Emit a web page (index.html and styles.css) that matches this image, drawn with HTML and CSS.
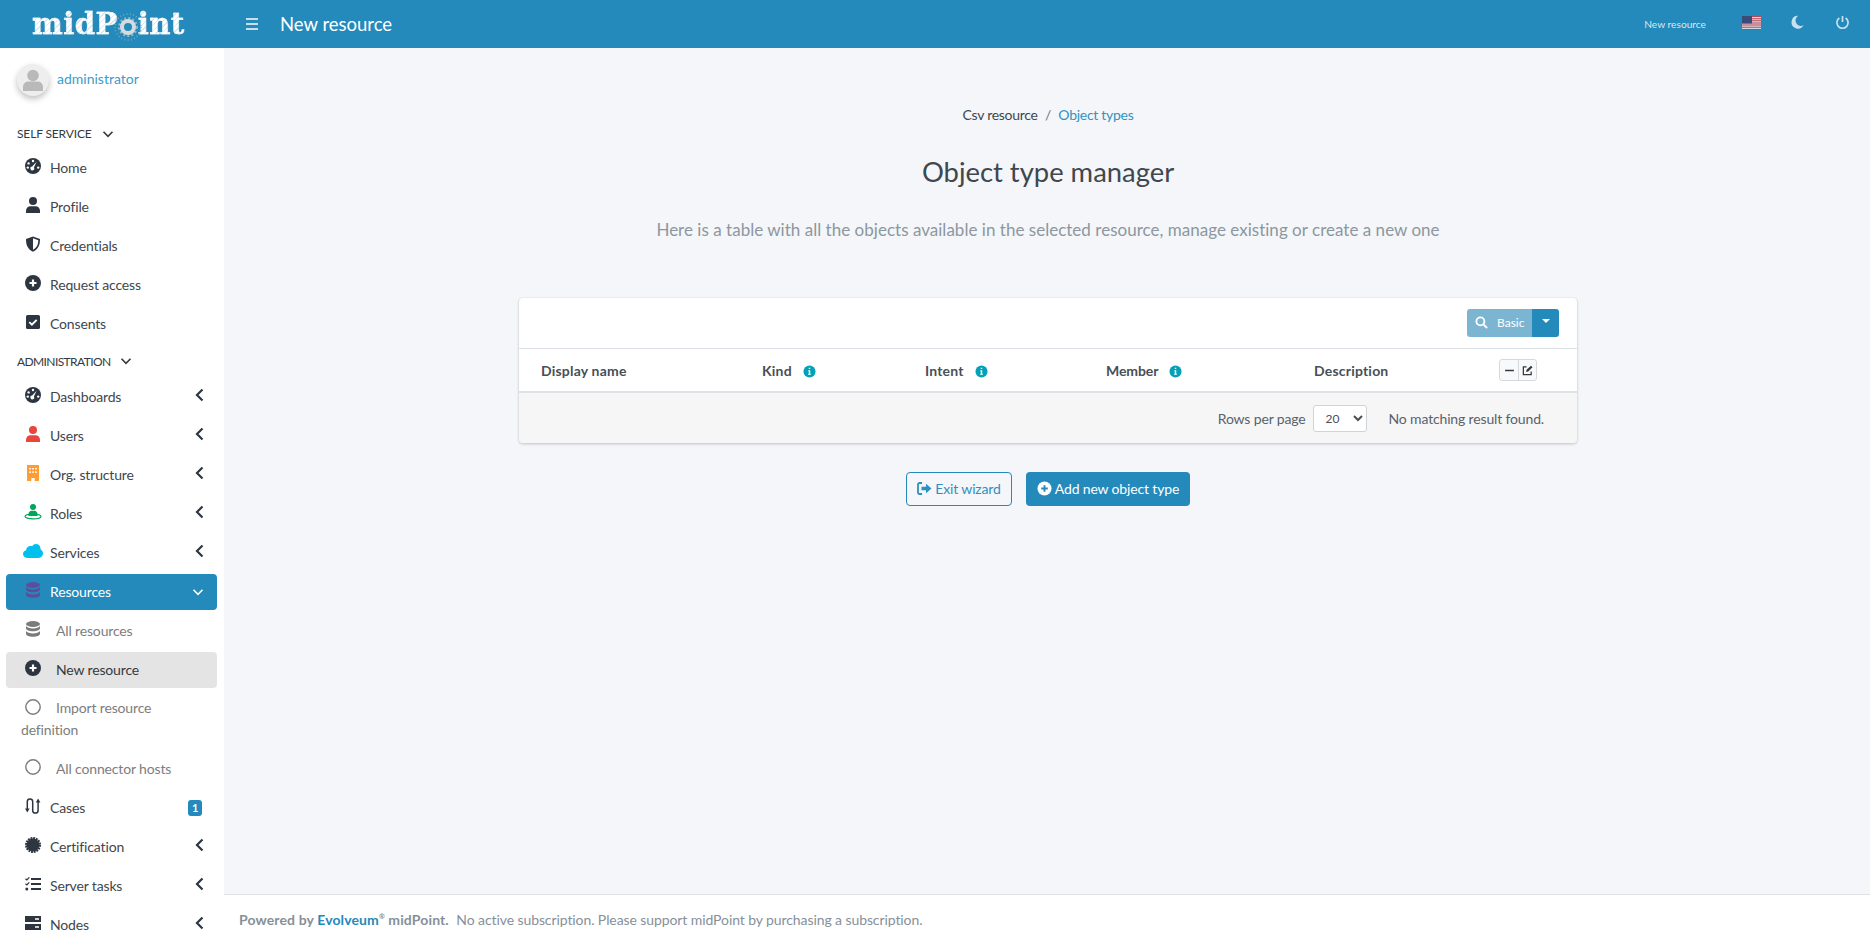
FILE: index.html
```html
<!DOCTYPE html>
<html lang="en">
<head>
  <meta charset="UTF-8" />
  <title>New resource</title>
  <link rel="stylesheet" href="styles.css">
</head>
<body>

  <svg class="sprite" xmlns="http://www.w3.org/2000/svg">
    <symbol id="i-gauge" viewBox="0 0 16 16">
      <circle cx="8" cy="8" r="8" fill="currentColor"/>
      <circle cx="8" cy="3" r="1.2" fill="#fff"/>
      <circle cx="3.6" cy="5.4" r="1.2" fill="#fff"/>
      <circle cx="2.8" cy="9.6" r="1.2" fill="#fff"/>
      <circle cx="13.2" cy="9.6" r="1.2" fill="#fff"/>
      <path d="M11.6 3.8 8.9 9.4a1.9 1.9 0 1 1-1.7-.9z" fill="#fff"/>
    </symbol>
    <symbol id="i-user" viewBox="0 0 16 16">
      <circle cx="8" cy="4" r="4" fill="currentColor"/>
      <path d="M1 16v-2.200C1 11 3 9.200 5.500 9.200h5C13 9.200 15 11 15 13.800V16z" fill="currentColor"/>
    </symbol>
    <symbol id="i-shield" viewBox="0 0 16 16">
      <path d="M8 .5 1 3c0 6 1.500 10 7 12.800C13.500 13 15 9 15 3zM8 13.800V2.300l5.300 1.900C13.100 8.800 11.800 11.700 8 13.800z" fill="currentColor" fill-rule="evenodd"/>
    </symbol>
    <symbol id="i-plus" viewBox="0 0 16 16">
      <circle cx="8" cy="8" r="8" fill="currentColor"/>
      <path d="M8 4.500v7M4.500 8h7" stroke="#fff" stroke-width="2.200"/>
    </symbol>
    <symbol id="i-check" viewBox="0 0 16 16">
      <rect x="1" y="1" width="14" height="14" rx="1.600" fill="currentColor"/>
      <path d="M4.300 8.100 6.900 10.600 11.700 5.800" fill="none" stroke="#fff" stroke-width="1.900"/>
    </symbol>
    <symbol id="i-building" viewBox="0 0 16 16">
      <path d="M2 0h12v16H9.700v-3H6.300v3H2z" fill="currentColor"/>
      <path d="M4.300 3h1.600v1.600H4.300zM7.200 3h1.600v1.600H7.200zM10.100 3h1.600v1.600h-1.600zM4.300 6.300h1.600v1.600H4.300zM7.200 6.300h1.600v1.600H7.200zM10.100 6.300h1.600v1.600h-1.600z" fill="#fff"/>
    </symbol>
    <symbol id="i-role" viewBox="0 0 18 16">
      <circle cx="9" cy="3" r="3" fill="currentColor"/>
      <path d="M4.500 12V10c0-2 1.500-3.300 3-3.300h3c1.500 0 3 1.300 3 3.300v2z" fill="currentColor"/>
      <ellipse cx="9" cy="12.500" rx="8" ry="2.400" fill="none" stroke="currentColor" stroke-width="1.200"/>
    </symbol>
    <symbol id="i-cloud" viewBox="0 0 20 16">
      <path d="M4.500 15C2 15 0 13.200 0 11c0-1.900 1.300-3.400 3.100-3.800C3.300 4.800 5 3 7.500 3c.6-.1 1.200 0 1.700.3C10 1.900 11.500 1 13 1c2.600 0 4.500 2 4.500 4.500v.7c1.500.8 2.500 2.300 2.500 4.100 0 2.600-2 4.700-4.600 4.700z" fill="currentColor"/>
    </symbol>
    <symbol id="i-db" viewBox="0 0 16 16">
      <ellipse cx="8" cy="3" rx="7" ry="3" fill="currentColor"/>
      <path d="M1 5v2.300c0 1.700 3.100 3 7 3s7-1.300 7-3V5c-1 1.600-3.800 2.500-7 2.500S2 6.600 1 5z" fill="currentColor"/>
      <path d="M1 10v2.700c0 1.700 3.100 3 7 3s7-1.300 7-3V10c-1 1.600-3.800 2.500-7 2.500S2 11.600 1 10z" fill="currentColor"/>
    </symbol>
    <symbol id="i-ring" viewBox="0 0 16 16">
      <circle cx="8" cy="8" r="7.200" fill="none" stroke="currentColor" stroke-width="1.400"/>
    </symbol>
    <symbol id="i-cases" viewBox="0 0 16 16">
      <path d="M2.300 11V3.600a2.700 2.700 0 0 1 5.400 0v8.800a2.700 2.700 0 0 0 5.400 0V4" fill="none" stroke="currentColor" stroke-width="1.500"/>
      <path d="M0 10.500h4.600L2.300 14.500zM10.800 4.500h4.600L13.100.5z" fill="currentColor"/>
    </symbol>
    <symbol id="i-cert" viewBox="0 0 16 16">
      <circle cx="8" cy="8" r="6.500" fill="currentColor"/>
      <circle cx="8" cy="8" r="7" fill="none" stroke="currentColor" stroke-width="2" stroke-dasharray="1.900 .85"/>
    </symbol>
    <symbol id="i-tasks" viewBox="0 0 16 16">
      <path d="M6 3h10M6 8h10M6 13h10" stroke="currentColor" stroke-width="1.900"/>
      <path d="M.5 2.700 1.900 4 4.300 1.300M.5 7.700 1.900 9 4.300 6.300" fill="none" stroke="currentColor" stroke-width="1.200"/>
      <circle cx="1.800" cy="13" r="1.500" fill="currentColor"/>
    </symbol>
    <symbol id="i-server" viewBox="0 0 16 16">
      <path d="M0 1h16v6H0zM0 9h16v6H0z" fill="currentColor"/>
      <path d="M10 3.300h4v1.400h-4zM10 11.300h4v1.400h-4z" fill="#fff"/>
    </symbol>
    <symbol id="i-left" viewBox="0 0 9 14">
      <path d="M7.500 1.500 2 7l5.500 5.500" fill="none" stroke="currentColor" stroke-width="2.200"/>
    </symbol>
    <symbol id="i-down" viewBox="0 0 16 10">
      <path d="M2 2l6 6 6-6" fill="none" stroke="currentColor" stroke-width="2.200"/>
    </symbol>
    <symbol id="i-info" viewBox="0 0 14 14">
      <circle cx="7" cy="7" r="6.500" fill="#00a2b9"/>
      <path d="M6.200 2.900h1.600v1.500H6.200zM5.700 5.700h2.100v3.600h.7v1.200h-3V9.300h.7V6.800h-.5z" fill="#fff"/>
    </symbol>
  </svg>

  <header class="topbar">
    <a class="logo">
      <span class="logo-text">midP</span><span class="logo-o">o<svg viewBox="0 0 28 28"><circle cx="14" cy="14" r="13" fill="none" stroke="#7ba9c2" stroke-width="2" stroke-dasharray=".8 2.500"/><circle cx="14" cy="14" r="8.500" fill="none" stroke="#8fb4c8" stroke-width="3" stroke-dasharray="2 2"/><circle cx="14" cy="14" r="6" fill="none" stroke="#d5dce0" stroke-width="4"/></svg></span><span class="logo-text">int</span>
    </a>
    <span class="burger"><i></i><i></i><i></i></span>
    <span class="page-name">New resource</span>
    <span class="top-crumb">New resource</span>
    <svg class="flag" viewBox="0 0 19 14">
      <rect width="19" height="14" fill="#d8d8e0"/>
      <path d="M0 0h19v1.100H0zM0 2.200h19v1H0zM0 4.300h19v1H0zM0 6.500h19v1H0zM0 8.600h19v1H0zM0 10.800h19v1H0zM0 12.900h19V14H0z" fill="#b8485a"/>
      <rect width="10" height="7.500" fill="#3c4a78"/>
    </svg>
    <svg class="top-icon moon" viewBox="0 0 14 14"><path d="M8 .3A6.900 6.900 0 1 0 13.500 10.600 5.600 5.600 0 0 1 8 .3z" fill="currentColor"/></svg>
    <svg class="top-icon power" viewBox="0 0 16 16"><path d="M8 1v6.500" stroke="currentColor" stroke-width="1.800" fill="none"/><path d="M4.600 3.200a6 6 0 1 0 6.800 0" stroke="currentColor" stroke-width="1.800" fill="none"/></svg>
  </header>

  <div class="layout">
    <aside class="sidebar">
      <div class="user-panel">
        <span class="avatar"><svg viewBox="0 0 32 32"><circle cx="16" cy="11.500" r="5.800" fill="#b9b9b9"/><path d="M6 27v-4c0-3.500 2.700-5.500 5.500-5.500h9c2.800 0 5.500 2 5.500 5.500v4z" fill="#b9b9b9"/></svg></span>
        <a class="user-name">administrator</a>
      </div>

      <div class="section-title">SELF SERVICE <svg class="caret"><use href="#i-down"/></svg></div>
      <ul class="nav">
        <li class="nav-item"><svg class="ico"><use href="#i-gauge"/></svg>Home</li>
        <li class="nav-item"><svg class="ico"><use href="#i-user"/></svg>Profile</li>
        <li class="nav-item"><svg class="ico"><use href="#i-shield"/></svg>Credentials</li>
        <li class="nav-item"><svg class="ico"><use href="#i-plus"/></svg>Request access</li>
        <li class="nav-item"><svg class="ico"><use href="#i-check"/></svg>Consents</li>
      </ul>

      <div class="section-title second">ADMINISTRATION <svg class="caret"><use href="#i-down"/></svg></div>
      <ul class="nav">
        <li class="nav-item"><svg class="ico"><use href="#i-gauge"/></svg>Dashboards<svg class="arrow"><use href="#i-left"/></svg></li>
        <li class="nav-item"><svg class="ico red"><use href="#i-user"/></svg>Users<svg class="arrow"><use href="#i-left"/></svg></li>
        <li class="nav-item"><svg class="ico orange"><use href="#i-building"/></svg>Org. structure<svg class="arrow"><use href="#i-left"/></svg></li>
        <li class="nav-item"><svg class="ico green wide"><use href="#i-role"/></svg>Roles<svg class="arrow"><use href="#i-left"/></svg></li>
        <li class="nav-item"><svg class="ico sky wider"><use href="#i-cloud"/></svg>Services<svg class="arrow"><use href="#i-left"/></svg></li>
        <li class="nav-item active"><svg class="ico purple"><use href="#i-db"/></svg>Resources<svg class="arrow open"><use href="#i-down"/></svg></li>
        <li class="nav-item sub"><svg class="ico grey"><use href="#i-db"/></svg>All resources</li>
        <li class="nav-item sub current"><svg class="ico"><use href="#i-plus"/></svg>New resource</li>
        <li class="nav-item sub multi"><svg class="ico grey"><use href="#i-ring"/></svg>Import resource definition</li>
        <li class="nav-item sub"><svg class="ico grey"><use href="#i-ring"/></svg>All connector hosts</li>
        <li class="nav-item"><svg class="ico"><use href="#i-cases"/></svg>Cases<span class="badge">1</span></li>
        <li class="nav-item"><svg class="ico"><use href="#i-cert"/></svg>Certification<svg class="arrow"><use href="#i-left"/></svg></li>
        <li class="nav-item"><svg class="ico"><use href="#i-tasks"/></svg>Server tasks<svg class="arrow"><use href="#i-left"/></svg></li>
        <li class="nav-item"><svg class="ico"><use href="#i-server"/></svg>Nodes<svg class="arrow"><use href="#i-left"/></svg></li>
      </ul>
    </aside>

    <div class="main">
      <main class="content">
        <nav class="crumbs">Csv resource <span class="sep">/</span> <a>Object types</a></nav>
        <h1>Object type manager</h1>
        <p class="lead">Here is a table with all the objects available in the selected resource, manage existing or create a new one</p>

        <section class="card">
          <div class="card-tools">
            <div class="search-btn">
              <span class="basic"><svg viewBox="0 0 14 14"><circle cx="5.800" cy="5.800" r="4.300" fill="none" stroke="currentColor" stroke-width="2"/><path d="M9 9l4 4" stroke="currentColor" stroke-width="2.200"/></svg>Basic</span>
              <span class="drop"><i></i></span>
            </div>
          </div>
          <table class="grid">
            <thead>
              <tr>
                <th class="c1">Display name</th>
                <th class="c2">Kind <svg class="info"><use href="#i-info"/></svg></th>
                <th class="c3">Intent <svg class="info"><use href="#i-info"/></svg></th>
                <th class="c4">Member <svg class="info"><use href="#i-info"/></svg></th>
                <th class="c5">Description</th>
                <th class="c6">
                  <span class="mini-group">
                    <span class="mini"><svg viewBox="0 0 10 10"><path d="M1 5h8" stroke="currentColor" stroke-width="1.500"/></svg></span>
                    <span class="mini"><svg viewBox="0 0 12 12"><path d="M10 7v3.500H1.500V2H5" fill="none" stroke="currentColor" stroke-width="1.400"/><path d="M4.500 7.500 5 5.300 9.800.7l1.700 1.700L6.800 7z" fill="currentColor"/></svg></span>
                  </span>
                </th>
              </tr>
            </thead>
          </table>
          <div class="card-foot">
            <label class="rows">Rows per page</label>
            <select class="rows-select"><option>20</option></select>
            <span class="no-result">No matching result found.</span>
          </div>
        </section>

        <div class="actions">
          <button class="btn btn-outline"><svg viewBox="0 0 15 14"><path d="M5 1.500H2.500A1.500 1.500 0 0 0 1 3v8a1.500 1.500 0 0 0 1.500 1.500H5" fill="none" stroke="currentColor" stroke-width="1.800"/><path d="M4.500 5.300h4.500V2.200L14.500 7 9 11.800V8.700H4.500z" fill="currentColor"/></svg>Exit wizard</button>
          <button class="btn btn-primary"><svg viewBox="0 0 16 16"><circle cx="8" cy="8" r="7.500" fill="#fff"/><path d="M8 4.500v7M4.500 8h7" stroke="#2489bb" stroke-width="2"/></svg>Add new object type</button>
        </div>
      </main>

      <footer class="footer"><strong>Powered by <a>Evolveum</a><sup>®</sup> midPoint.</strong> No active subscription. Please support midPoint by purchasing a subscription.</footer>
    </div>
  </div>

</body>
</html>
```

FILE: styles.css
```css
* {
  box-sizing: border-box;
}

html, body {
  height: 100%;
}

body {
  margin: 0;
  font-family: "Lato", "Noto Sans", sans-serif;
  font-size: 14px;
  letter-spacing: -0.15px;
  color: #343a40;
  background-color: #f4f6f9;
  overflow: hidden;
}

.sprite {
  display: none;
}

/* top bar */
.topbar {
  display: flex;
  align-items: center;
  height: 48px;
  background-color: #2489bb;
  color: #fff;
}

.logo {
  display: flex;
  align-items: center;
  width: 224px;
  padding-left: 32px;
  font-family: "DejaVu Serif", serif;
  font-weight: bold;
  font-size: 29px;
  letter-spacing: 0.5px;
}

.logo-text {
  background: repeating-linear-gradient(135deg, #fff 0 3px, #d6e7f0 3px 4px);
  -webkit-background-clip: text;
  background-clip: text;
  color: transparent;
  -webkit-text-stroke: 0.4px rgba(255,255,255,0.8);
}

.logo-o {
  position: relative;
  color: transparent;
}

.logo-o svg {
  position: absolute;
  left: -4px;
  top: 6px;
  width: 28px;
  height: 28px;
}

.burger {
  display: flex;
  flex-direction: column;
  gap: 3px;
  width: 12px;
  margin: 0 22px 0 22px;
}

.burger i {
  display: block;
  height: 2px;
  background-color: #c8dfeb;
}

.page-name {
  font-size: 18.5px;
  letter-spacing: 0;
  flex: 1;
}

.top-crumb {
  font-size: 10.2px;
  letter-spacing: 0;
  color: #d8e8f1;
  margin-right: 36px;
}

.flag {
  width: 19px;
  height: 14px;
  margin-right: 30px;
  margin-top: -2px;
}

.top-icon {
  color: #c9e1ee;
}

.moon {
  width: 13px;
  height: 14px;
  margin-right: 31px;
  margin-top: -5px;
}

.power {
  width: 15px;
  height: 15px;
  margin-right: 20px;
  margin-top: -4px;
}

/* sidebar */
.layout {
  display: flex;
  height: calc(100% - 48px);
}

.sidebar {
  width: 224px;
  flex-shrink: 0;
  background-color: #fff;
  padding: 0 7px 0 6px;
  overflow: hidden;
}

.user-panel {
  display: flex;
  align-items: flex-start;
  gap: 8px;
  height: 69px;
  padding: 16px 0 0 11px;
  letter-spacing: 0;
}

.avatar {
  width: 32px;
  height: 32px;
  border-radius: 50%;
  background-color: #eee;
  box-shadow: 0 3px 6px rgba(0,0,0,0.25);
}

.avatar svg {
  display: block;
  width: 32px;
  height: 32px;
}

.user-name {
  color: #3c9ccb;
  line-height: 30px;
}

.section-title {
  display: flex;
  align-items: center;
  gap: 10px;
  height: 33px;
  padding: 0 0 0 11px;
  font-size: 12px;
  letter-spacing: -0.15px;
  color: #343a40;
}

.second {
  height: 34px;
  padding-bottom: 2px;
  letter-spacing: -0.6px;
}

.caret {
  width: 12px;
  height: 8px;
}

.nav {
  list-style: none;
  margin: 0;
  padding: 0;
}

.nav-item {
  display: flex;
  align-items: center;
  position: relative;
  height: 36px;
  margin-bottom: 3px;
  padding-left: 44px;
  padding-bottom: 2px;
  border-radius: 4px;
  color: #40474e;
}

.ico {
  position: absolute;
  left: 19px;
  top: 8px;
  width: 16px;
  height: 16px;
  color: #2d3640;
}

.red { color: #e8463c; }
.orange { color: #ff9c33; }
.green { color: #00a65a; }
.sky { color: #00c0ef; }
.purple { color: #5b4f9d; }
.grey { color: #7b7b7b; }

.wide {
  width: 18px;
  left: 18px;
}

.wider {
  width: 20px;
  left: 17px;
}

.arrow {
  position: absolute;
  left: 189px;
  top: 9px;
  width: 9px;
  height: 14px;
  color: #2d3640;
}

.arrow.open {
  left: 186px;
  top: 14px;
  width: 12px;
  height: 8px;
  color: #fff;
}

.active {
  background-color: #2489bb;
  color: #fff;
}

.sub {
  padding-left: 50px;
  color: #7d7d7d;
}

.current {
  background-color: #e4e4e4;
  color: #343a40;
}

.multi {
  display: block;
  height: 57px;
  padding: 6px 10px 0 15px;
  line-height: 22px;
  text-indent: 35px;
}

.badge {
  position: absolute;
  left: 182px;
  top: 10px;
  width: 14px;
  height: 16px;
  border-radius: 3px;
  background-color: #2489bb;
  color: #fff;
  font-size: 11px;
  font-weight: bold;
  line-height: 16px;
  text-align: center;
}

/* main */
.main {
  flex: 1;
  display: flex;
  flex-direction: column;
  min-width: 0;
}

.content {
  flex: 1;
  display: flex;
  flex-direction: column;
  align-items: center;
  padding-left: 2px;
}

.crumbs {
  margin-top: 57px;
  line-height: 20px;
  letter-spacing: -0.28px;
  color: #40474e;
}

.crumbs a {
  color: #2f93c4;
}

.sep {
  margin: 0 4px;
  color: #6c757d;
}

h1 {
  margin: 30px 0 0;
  font-size: 27.4px;
  font-weight: 400;
  letter-spacing: 0;
  line-height: 34px;
  color: #40474e;
}

.lead {
  margin: 29px 0 0;
  font-size: 17px;
  letter-spacing: 0.02px;
  line-height: 24px;
  color: #8d97a0;
}

.card {
  width: 1058px;
  margin-top: 56px;
  background-color: #fff;
  border-radius: 4px;
  box-shadow: 0 0 1px rgba(0,0,0,0.13), 0 1px 3px rgba(0,0,0,0.2);
  overflow: hidden;
}

.card-tools {
  display: flex;
  justify-content: flex-end;
  height: 51px;
  padding: 11px 18px 0 0;
  border-bottom: 1px solid #dee2e6;
}

.search-btn {
  display: flex;
  height: 28px;
  border-radius: 3px;
  overflow: hidden;
  color: #fff;
  font-size: 12px;
  letter-spacing: 0;
}

.basic {
  display: flex;
  align-items: center;
  gap: 9px;
  width: 65px;
  padding: 0 0 2px 8px;
  background-color: #7bb5d2;
}

.basic svg {
  width: 13px;
  height: 13px;
}

.drop {
  display: flex;
  justify-content: center;
  padding-top: 10px;
  width: 27px;
  background-color: #2489bb;
}

.drop i {
  width: 0;
  height: 0;
  border: 4px solid transparent;
  border-top-color: #fff;
}

.grid {
  width: 100%;
  table-layout: fixed;
  border-collapse: collapse;
}

.grid th {
  height: 43px;
  padding: 0 0 0 22px;
  border-bottom: 2px solid #dee2e6;
  text-align: left;
  font-size: 14px;
  font-weight: bold;
  letter-spacing: 0.2px;
  color: #474f57;
}

.c1 { width: 221px; }
.c2 { width: 163px; }
.c3 { width: 181px; }
.c4 { width: 208px; letter-spacing: -0.1px; }
.c5 { width: 185px; }

.grid th.c4 {
  letter-spacing: -0.1px;
}

.info {
  width: 13px;
  height: 13px;
  margin-left: 8px;
  vertical-align: -2px;
}

.mini-group {
  display: inline-flex;
  vertical-align: middle;
  border: 1px solid #d6d9dc;
  border-radius: 3px;
  background-color: #f8f9fa;
}

.mini {
  display: flex;
  align-items: center;
  justify-content: center;
  width: 18px;
  height: 20px;
  color: #343a40;
}

.mini + .mini {
  border-left: 1px solid #d6d9dc;
}

.mini svg {
  width: 11px;
  height: 11px;
}

.card-foot {
  display: flex;
  align-items: center;
  justify-content: flex-end;
  height: 50px;
  padding-right: 33px;
  background-color: #f6f6f7;
  color: #59626b;
}

.rows-select {
  width: 54px;
  height: 27px;
  margin: 0 22px 0 7px;
  padding: 0 8px;
  border: 1px solid #ced4da;
  border-radius: 3px;
  background-color: #fff;
  font: 12px "Lato", sans-serif;
  color: #495057;
}

.actions {
  display: flex;
  gap: 14px;
  margin-top: 29px;
}

.btn {
  display: flex;
  align-items: center;
  justify-content: center;
  gap: 3px;
  height: 34px;
  padding: 0 0 2px;
  border-radius: 4px;
  font: 14px "Lato", sans-serif;
  letter-spacing: -0.15px;
  cursor: pointer;
}

.btn svg {
  width: 15px;
  height: 15px;
}

.btn-outline {
  width: 106px;
  border: 1px solid #2489bb;
  background: transparent;
  color: #2f8fc0;
}

.btn-primary {
  width: 164px;
  border: none;
  background-color: #2489bb;
  color: #fff;
}

.footer {
  height: 50px;
  padding: 0 15px;
  border-top: 1px solid #dee2e6;
  background-color: #fff;
  line-height: 49px;
  font-size: 14px;
  letter-spacing: -0.09px;
  color: #869099;
}

.footer strong {
  letter-spacing: 0.12px;
  margin-right: 4px;
}

.footer a {
  color: #2489bb;
}

.footer sup {
  font-size: 7px;
  line-height: 0;
}
```
